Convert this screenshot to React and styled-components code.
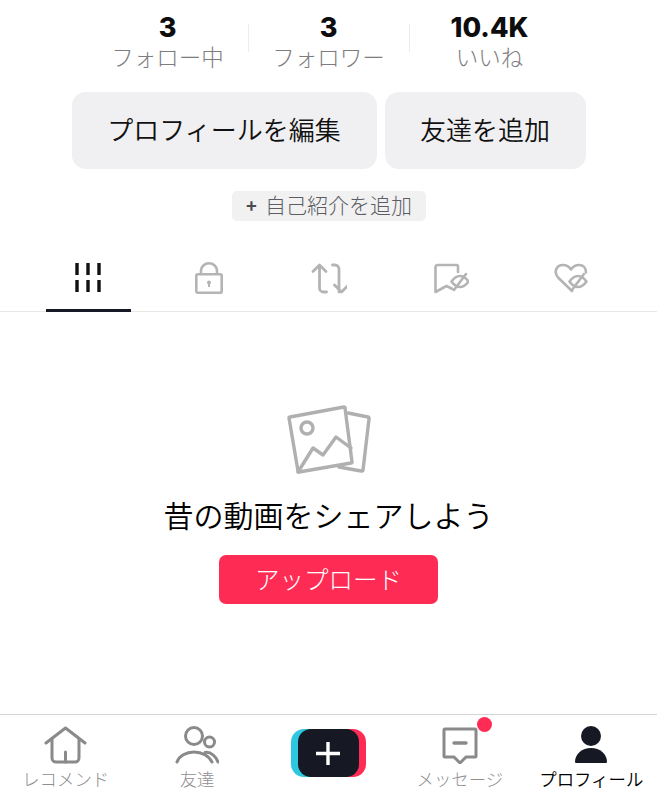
import React from "react";
import styled, { createGlobalStyle } from "styled-components";

const stats = [
  { value: "3", label: "フォロー中" },
  { value: "3", label: "フォロワー" },
  { value: "10.4K", label: "いいね" },
];

const GridIcon = () => (
  <svg width="28" height="30" viewBox="0 0 28 30" fill="none" stroke="#111" strokeWidth="3.4">
    <path d="M3 0v12M14 0v12M25 0v12M3 17v12M14 17v12M25 17v12" />
  </svg>
);

const LockIcon = () => (
  <svg width="30" height="32" viewBox="0 0 30 32" fill="none" stroke="#b4b4b4" strokeWidth="2.6">
    <rect x="2.3" y="12.3" width="25.4" height="18.4" rx="1.5" />
    <path d="M7 12V8.500a8 7.200 0 0 1 16 0V12" />
    <circle cx="15" cy="20.500" r="2" fill="#b4b4b4" stroke="none" />
    <path d="M15 21v4" strokeWidth="2" />
  </svg>
);

const RepostIcon = () => (
  <svg width="36" height="31" viewBox="0 0 36 31" fill="none" stroke="#b4b4b4" strokeWidth="2.8" strokeLinecap="round" strokeLinejoin="round">
    <path d="M2 8.500L8.500 2 15 8.500M8.500 3v22a4 4 0 0 0 4 4h3" />
    <path d="M19 2h2.500a4 4 0 0 1 4 4v23M21 22l7 7 7-7" transform="translate(2.500 0)" />
  </svg>
);

const BookmarkOffIcon = () => (
  <svg width="38" height="31" viewBox="0 0 38 31" fill="none" stroke="#b4b4b4" strokeWidth="2.6" strokeLinecap="round" strokeLinejoin="round">
    <path d="M27 9V3.500A1.500 1.500 0 0 0 25.500 2H6.500a2 2 0 0 0-2 2v25l11-6 6 3" />
    <path d="M20.500 18.500c2.500-3.500 5-5.500 8.500-5.500s6 2 8.500 5.500c-2.500 3.500-5 5.500-8.500 5.500s-6-2-8.500-5.500z" />
    <path d="M23 27l12-16" />
  </svg>
);

const HeartOffIcon = () => (
  <svg width="35" height="31" viewBox="0 0 35 31" fill="none" stroke="#b4b4b4" strokeWidth="2.6" strokeLinecap="round" strokeLinejoin="round">
    <path d="M19 28L5.500 15C0 9 3.500 2 10 2c3.500 0 6 1.500 8 4.500C20 3.500 22.500 2 26 2c4.500 0 7 3 7 7.500" />
    <path d="M16.500 18.500c2.500-3.500 5-5.500 8.500-5.500s6 2 8.500 5.500c-2.500 3.500-5 5.500-8.500 5.500s-6-2-8.500-5.500z" />
    <path d="M19 27l12-16" />
  </svg>
);

const PhotosIcon = () => (
  <svg width="84" height="70" viewBox="0 0 84 70" fill="none" stroke="#b0b0b0" strokeWidth="3.4" strokeLinejoin="round" strokeLinecap="round">
    <path d="M61 8l20 4a1.500 1.500 0 0 1 1 2l-6 51a1.500 1.500 0 0 1-2 1l-22-4" />
    <path d="M3 12L57 2a1 1 0 0 1 1 1l7 54a1 1 0 0 1-1 1L12 67a1 1 0 0 1-1-1L2 13a1 1 0 0 1 1-1z" />
    <circle cx="20" cy="23" r="6" />
    <path d="M11 67l15-24 10 7 13-18 15 11" />
  </svg>
);

const HomeIcon = () => (
  <svg width="43" height="38" viewBox="0 0 43 38" fill="none" stroke="#8a8a8c" strokeWidth="3" strokeLinejoin="round" strokeLinecap="round">
    <path d="M2 17L21.500 2 41 17" />
    <path d="M8 13v19a4 4 0 0 0 4 4h19a4 4 0 0 0 4-4V13" />
    <path d="M21.500 26v10" />
  </svg>
);

const FriendsIcon = () => (
  <svg width="44" height="38" viewBox="0 0 44 38" fill="none" stroke="#8a8a8c" strokeWidth="3" strokeLinecap="round">
    <circle cx="19" cy="10" r="8.500" />
    <circle cx="34.500" cy="16" r="5" />
    <path d="M2 36c2-6 9-10 17-10s15 4 18 10" />
    <path d="M30 26.500c6-1 11 4 13 9.500" />
  </svg>
);

const MessageIcon = () => (
  <svg width="36" height="38" viewBox="0 0 36 38" fill="none" stroke="#8a8a8c" strokeWidth="3" strokeLinejoin="round" strokeLinecap="round">
    <path d="M3 3h30a1 1 0 0 1 1 1v26a1 1 0 0 1-1 1h-9l-6 6-6-6H3a1 1 0 0 1-1-1V4a1 1 0 0 1 1-1z" />
    <path d="M12 17h12" strokeWidth="3.400" />
  </svg>
);

const ProfileIcon = () => (
  <svg width="34" height="38" viewBox="0 0 34 38" fill="#161823">
    <circle cx="17" cy="10" r="10" />
    <path d="M1 36c0-8 7-14 16-14s16 6 16 14a1 1 0 0 1-1 1H2a1 1 0 0 1-1-1z" />
  </svg>
);

export default function App() {
  return (
    <>
      <GlobalStyle />
      <Page>
        <Stats>
          {stats.map((s, i) => (
            <Stat key={s.label} $first={i === 0}>
              <StatValue>{s.value}</StatValue>
              <StatLabel>{s.label}</StatLabel>
            </Stat>
          ))}
        </Stats>
        <Actions>
          <ActionButton $w={305}>プロフィールを編集</ActionButton>
          <ActionButton $w={201}>友達を追加</ActionButton>
        </Actions>
        <BioRow>
          <BioChip>
            <b>+</b> 自己紹介を追加
          </BioChip>
        </BioRow>
        <Tabs>
          <Tab $active><GridIcon /></Tab>
          <Tab><LockIcon /></Tab>
          <Tab><RepostIcon /></Tab>
          <Tab><BookmarkOffIcon /></Tab>
          <Tab><HeartOffIcon /></Tab>
        </Tabs>
        <Empty>
          <PhotosIcon />
          <EmptyTitle>昔の動画をシェアしよう</EmptyTitle>
          <UploadButton>アップロード</UploadButton>
        </Empty>
        <BottomNav>
          <NavItem><HomeIcon /><NavLabel>レコメンド</NavLabel></NavItem>
          <NavItem><FriendsIcon /><NavLabel>友達</NavLabel></NavItem>
          <NavItem>
            <CreateButton>
              <svg width="24" height="23" viewBox="0 0 24 23" fill="none" stroke="#fff" strokeWidth="3.400">
                <path d="M12 0v23M0 11.500h24" />
              </svg>
            </CreateButton>
          </NavItem>
          <NavItem>
            <IconWrap>
              <MessageIcon />
              <Badge />
            </IconWrap>
            <NavLabel>メッセージ</NavLabel>
          </NavItem>
          <NavItem><ProfileIcon /><NavLabel $active>プロフィール</NavLabel></NavItem>
        </BottomNav>
      </Page>
    </>
  );
}

const GlobalStyle = createGlobalStyle`
  html, body {
    margin: 0;
    background: #fff;
    font-family: "Noto Sans CJK JP", "Inter", sans-serif;
  }
`;

const Page = styled.div`
  width: 657px;
  height: 800px;
  display: flex;
  flex-direction: column;
  overflow: hidden;
`;

const Stats = styled.div`
  display: flex;
  justify-content: center;
  padding-top: 12px;
  height: 60px;
`;

const Stat = styled.div`
  width: 161px;
  display: flex;
  flex-direction: column;
  align-items: center;
  position: relative;
  &::before {
    content: "";
    display: ${(p) => (p.$first ? "none" : "block")};
    position: absolute;
    left: 0;
    top: 12px;
    height: 28px;
    width: 1px;
    background: #ececed;
  }
`;

const StatValue = styled.div`
  font-family: "Inter", sans-serif;
  font-size: 27px;
  font-weight: 800;
  line-height: 31px;
  color: #0d0d0d;
`;

const StatLabel = styled.div`
  font-size: 22.500px;
  font-weight: 300;
  line-height: 26px;
  color: #7d7d80;
`;

const Actions = styled.div`
  display: flex;
  justify-content: center;
  gap: 8px;
  margin-top: 20px;
`;

const ActionButton = styled.div`
  width: ${(p) => p.$w}px;
  height: 77px;
  padding-bottom: 4px;
  box-sizing: border-box;
  border-radius: 14px;
  background: #f0f0f2;
  display: flex;
  align-items: center;
  justify-content: center;
  font-size: 26px;
  font-weight: 350;
  color: #111;
`;

const BioRow = styled.div`
  display: flex;
  justify-content: center;
  margin-top: 22px;
`;

const BioChip = styled.div`
  height: 30px;
  width: 194px;
  padding-bottom: 4px;
  box-sizing: border-box;
  border-radius: 5px;
  background: #f1f1f2;
  display: flex;
  align-items: center;
  justify-content: center;
  gap: 7px;
  font-size: 21px;
  font-weight: 300;
  color: #5c5d63;
  b {
    color: #4a4a50;
    font-family: "Inter", sans-serif;
    font-size: 19px;
    font-weight: 600;
  }
`;

const Tabs = styled.div`
  display: flex;
  height: 91px;
  padding: 24px 0 0 28px;
  border-bottom: 1px solid #e8e8e9;
  box-sizing: border-box;
`;

const Tab = styled.div`
  width: 120.600px;
  flex: 0 0 auto;
  display: flex;
  align-items: center;
  justify-content: center;
  position: relative;
  &::after {
    content: "";
    display: ${(p) => (p.$active ? "block" : "none")};
    position: absolute;
    left: 18px;
    bottom: -1px;
    width: 85px;
    height: 3px;
    background: #161823;
  }
`;

const Empty = styled.div`
  flex: 1;
  display: flex;
  flex-direction: column;
  align-items: center;
  padding-top: 93px;
`;

const EmptyTitle = styled.div`
  margin-top: 18px;
  font-size: 30px;
  font-weight: 350;
  line-height: 42px;
  color: #000;
`;

const UploadButton = styled.div`
  margin-top: 20px;
  width: 219px;
  height: 49px;
  padding-bottom: 3px;
  box-sizing: border-box;
  border-radius: 7px;
  background: #fe2c55;
  color: #fff;
  display: flex;
  align-items: center;
  justify-content: center;
  font-size: 24.500px;
  font-weight: 300;
`;

const BottomNav = styled.div`
  height: 86px;
  border-top: 1px solid #d6d6d6;
  display: grid;
  grid-template-columns: repeat(5, 1fr);
  box-sizing: border-box;
  padding-top: 11px;
`;

const NavItem = styled.div`
  display: flex;
  flex-direction: column;
  align-items: center;
  gap: 3px;
`;

const NavLabel = styled.div`
  font-size: 17.400px;
  font-weight: ${(p) => (p.$active ? 350 : 300)};
  line-height: 24px;
  white-space: nowrap;
  color: ${(p) => (p.$active ? "#000" : "#8f8f92")};
`;

const IconWrap = styled.div`
  position: relative;
  height: 38px;
`;

const Badge = styled.span`
  position: absolute;
  top: -9px;
  right: -14px;
  width: 15px;
  height: 15px;
  border-radius: 50%;
  background: #fe2c55;
`;

const CreateButton = styled.div`
  width: 61px;
  height: 48px;
  margin-top: 3px;
  border-radius: 13px;
  background: #161823;
  display: flex;
  align-items: center;
  justify-content: center;
  box-shadow: -7px 0 0 #2dc8e0, 7px 0 0 #fe2c55;
`;
